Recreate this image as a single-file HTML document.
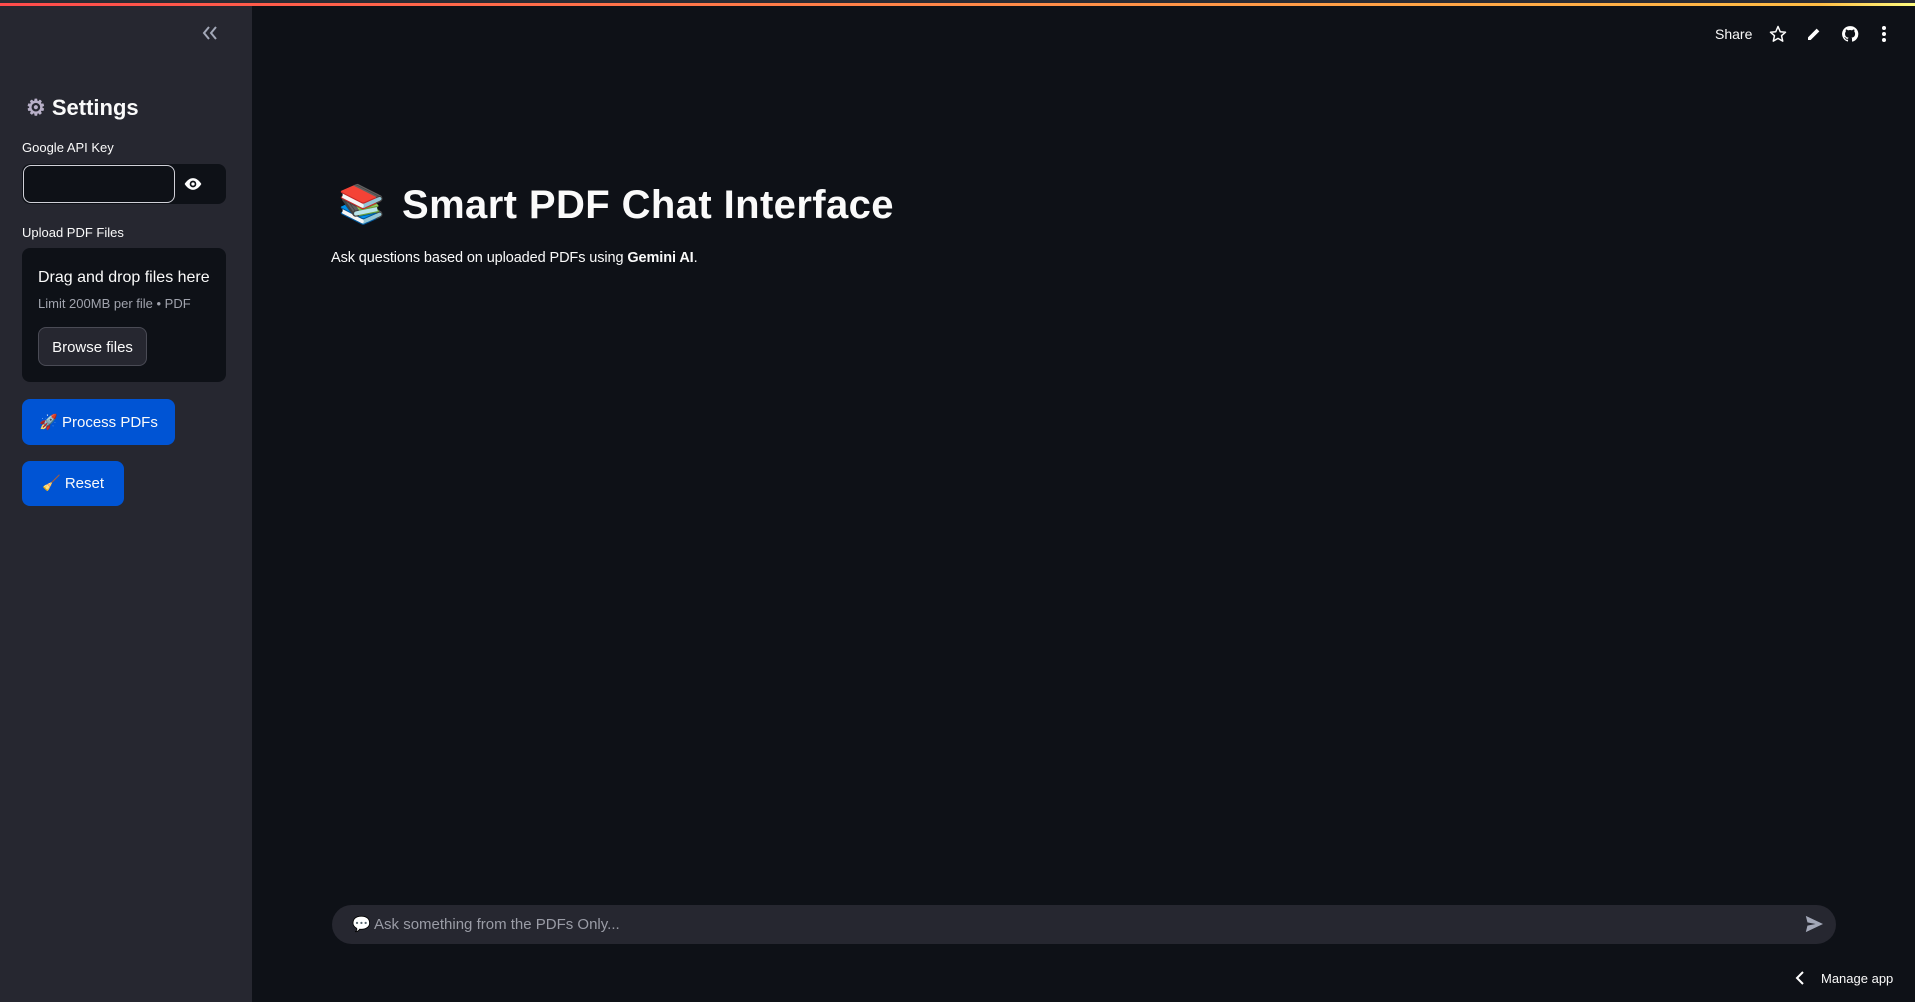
<!DOCTYPE html>
<html><head><meta charset="utf-8"><style>
*{box-sizing:border-box;margin:0;padding:0}
body{width:1915px;height:1002px;background:#0e1117;font-family:"Liberation Sans",sans-serif;color:#fafafa;position:relative;overflow:hidden}
.top{position:absolute;left:0;top:0;width:1915px;height:3px;background:#2a2b33}
.bar{position:absolute;left:0;top:3px;width:1915px;height:3px;background:linear-gradient(90deg,#ff4b4b,#ffbd45 95%,#fffd80)}
.side{position:absolute;left:0;top:6px;width:252px;height:996px;background:#262730}
.abs{position:absolute}
</style></head><body>
<div class="top"></div><div class="bar"></div>
<div class="side"></div>
<svg class="abs" style="left:202px;top:26px" width="16" height="14" viewBox="0 0 16 14"><path d="M7 1L2 7l5 6M14 1L9 7l5 6" fill="none" stroke="#a3a8b8" stroke-width="2"/></svg>
<div class="abs" style="left:26px;top:95px;font-size:22px;font-weight:bold;line-height:26px"><span style="color:#b8b0c8">⚙</span> Settings</div>
<div class="abs" style="left:22px;top:140px;font-size:13px">Google API Key</div>
<div class="abs" style="left:22px;top:164px;width:204px;height:40px;background:#0e1117;border-radius:8px"></div>
<div class="abs" style="left:23px;top:165px;width:152px;height:38px;border:1px solid #d0d0d8;border-radius:8px"></div>
<svg class="abs" style="left:183px;top:176px" width="20" height="16" viewBox="0 0 24 16"><path d="M12 1C6 1 2 8 2 8s4 7 10 7 10-7 10-7-4-7-10-7z" fill="#fff"/><circle cx="12" cy="8" r="4" fill="#0e1117"/><circle cx="12" cy="8" r="2" fill="#fff"/></svg>
<div class="abs" style="left:22px;top:225px;font-size:13px">Upload PDF Files</div>
<div class="abs" style="left:22px;top:248px;width:204px;height:134px;background:#0e1117;border-radius:8px"></div>
<div class="abs" style="left:38px;top:269px;font-size:16px">Drag and drop files here</div>
<div class="abs" style="left:38px;top:296px;font-size:13px;color:#a0a3ad">Limit 200MB per file • PDF</div>
<div class="abs" style="left:38px;top:327px;width:109px;height:39px;background:#262730;border:1px solid #4a4b55;border-radius:8px;font-size:15px;line-height:39px;text-align:center">Browse files</div>
<div class="abs" style="left:22px;top:399px;width:153px;height:46px;background:#0054d4;border-radius:8px;font-size:15px;line-height:47px;text-align:center">🚀 Process PDFs</div>
<div class="abs" style="left:22px;top:461px;width:102px;height:45px;background:#0054d4;border-radius:8px;font-size:15px;line-height:46px;text-align:center">🧹 Reset</div>
<div class="abs" style="left:1715px;top:26px;font-size:14px">Share</div>
<svg class="abs" style="left:1769px;top:25px" width="18" height="18" viewBox="0 0 24 24"><path d="M12 2l3 7 7 .6-5.3 4.7 1.6 7.2L12 17.8 5.7 21.5l1.6-7.2L2 9.6 9 9z" fill="none" stroke="#fff" stroke-width="2" stroke-linejoin="round"/></svg>
<svg class="abs" style="left:1806px;top:26px" width="16" height="16" viewBox="0 0 24 24"><path d="M3 21v-4L16 4l4 4L7 21z" fill="#fff"/></svg>
<svg class="abs" style="left:1841px;top:25px" width="18" height="18" viewBox="0 0 24 24"><path d="M12 1.5A10.5 10.5 0 0 0 8.7 22c.5.1.7-.2.7-.5v-2c-2.9.6-3.5-1.2-3.5-1.2-.5-1.2-1.2-1.5-1.2-1.5-1-.6.1-.6.1-.6 1 .1 1.6 1.1 1.6 1.1.9 1.6 2.5 1.1 3.1.9.1-.7.4-1.1.7-1.4-2.3-.3-4.8-1.2-4.8-5.2 0-1.1.4-2.1 1.1-2.8-.1-.3-.5-1.3.1-2.8 0 0 .9-.3 2.9 1.1a10 10 0 0 1 5.2 0c2-1.4 2.9-1.1 2.9-1.1.6 1.5.2 2.5.1 2.8.7.7 1.1 1.7 1.1 2.8 0 4-2.5 4.9-4.8 5.2.4.3.7 1 .7 1.9v2.9c0 .3.2.6.7.5A10.5 10.5 0 0 0 12 1.5z" fill="#fff"/></svg>
<svg class="abs" style="left:1880px;top:25px" width="8" height="18" viewBox="0 0 8 18"><circle cx="4" cy="3" r="2" fill="#fff"/><circle cx="4" cy="9" r="2" fill="#fff"/><circle cx="4" cy="15" r="2" fill="#fff"/></svg>
<div class="abs" style="left:338px;top:180px;font-size:38px;line-height:50px">📚</div>
<div class="abs" style="left:402px;top:181px;font-size:40px;font-weight:bold;line-height:48px;letter-spacing:0.4px">Smart PDF Chat Interface</div>
<div class="abs" style="left:331px;top:250px;font-size:14.5px;letter-spacing:-0.1px">Ask questions based on uploaded PDFs using <b>Gemini AI</b>.</div>
<div class="abs" style="left:332px;top:905px;width:1504px;height:39px;background:#262730;border-radius:20px"></div>
<div class="abs" style="left:352px;top:915px;font-size:15px;color:#9a9ca6">💬 Ask something from the PDFs Only...</div>
<svg class="abs" style="left:1804px;top:915px" width="20" height="18" viewBox="0 0 24 22"><path d="M2 1l21 10L2 21l2-8 10-2-10-2z" fill="#a3a8b8"/></svg>
<svg class="abs" style="left:1795px;top:971px" width="10" height="14" viewBox="0 0 10 14"><path d="M8 1L2 7l6 6" fill="none" stroke="#fff" stroke-width="2"/></svg>
<div class="abs" style="left:1821px;top:971px;font-size:13px">Manage app</div>
</body></html>
